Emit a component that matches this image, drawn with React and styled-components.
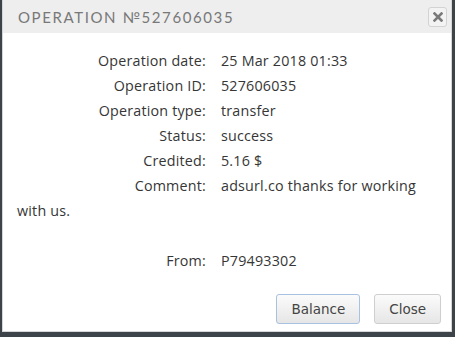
import styled, { createGlobalStyle } from "styled-components";

const GlobalStyle = createGlobalStyle`
  html, body {
    margin: 0;
    padding: 0;
    background: #3c444a;
  }
  #root { height: 337px; overflow: hidden; }
`;

const details = [
  { label: "Operation date:", value: "25 Mar 2018 01:33" },
  { label: "Operation ID:", value: "527606035" },
  { label: "Operation type:", value: "transfer" },
  { label: "Status:", value: "success" },
  { label: "Credited:", value: "5.16 $" },
  { label: "Comment:", value: "adsurl.co thanks for working with us." },
  { label: "From:", value: "P79493302", spaced: true },
];

const CloseIcon = () => (
  <svg width="10" height="10" viewBox="0 0 10 10">
    <path d="M1.5 1.5 L8.5 8.5 M8.5 1.5 L1.5 8.5" stroke="#7a7a7a" strokeWidth="2.6" strokeLinecap="square" />
  </svg>
);

const App = () => {
  return (
    <>
      <GlobalStyle />
      <Dialog>
        <TitleBar>
          <Title>Operation №527606035</Title>
          <CloseButton aria-label="close"><CloseIcon /></CloseButton>
        </TitleBar>
        <Content>
          {details.map((d) => (
            <Row key={d.label} $spaced={d.spaced}>
              <Label>{d.label}</Label>
              <Value>{d.value}</Value>
            </Row>
          ))}
        </Content>
        <Footer>
          <Button $focused>Balance</Button>
          <Button>Close</Button>
        </Footer>
      </Dialog>
    </>
  );
};

const Dialog = styled.div`
  box-sizing: border-box;
  margin: -1px 0 0 2px;
  width: 450px;
  height: 333px;
  background: #fff;
  border: 1px solid #d6d6d6;
  display: flex;
  flex-direction: column;
`;

const TitleBar = styled.div`
  height: 33px;
  flex: none;
  background: #eeeeee;
  display: flex;
  align-items: center;
  justify-content: space-between;
  padding: 0 4px 0 15px;
`;

const Title = styled.div`
  font-family: "Lato", "Open Sans", sans-serif;
  font-size: 15px;
  letter-spacing: 1.6px;
  text-transform: uppercase;
  color: #787878;
  padding-top: 1px;
`;

const CloseButton = styled.button`
  box-sizing: border-box;
  width: 19px;
  height: 20px;
  padding: 0;
  border: 1px solid #d3d3d3;
  border-radius: 3px;
  background: #f3f3f3;
  display: flex;
  align-items: center;
  justify-content: center;
`;

const Content = styled.div`
  flex: 1;
  padding: 15px 14px 0 14px;
  font-family: "Open Sans", sans-serif;
  font-size: 14.3px;
  letter-spacing: 0.2px;
  line-height: 25px;
  color: #363636;
`;

const Row = styled.div`
  margin-top: ${(p) => (p.$spaced ? "25px" : "0")};
`;

const Label = styled.span`
  display: inline-block;
  width: 189px;
  margin-right: 15px;
  text-align: right;
`;

const Value = styled.span``;

const Footer = styled.div`
  display: flex;
  justify-content: flex-end;
  gap: 14px;
  padding: 0 10px 7px 0;
`;

const Button = styled.button`
  box-sizing: border-box;
  height: 30px;
  padding: 0 14px;
  font-family: "DejaVu Sans", sans-serif;
  font-size: 13.5px;
  color: #444;
  background: linear-gradient(#fbfbfb, #e6e6e6);
  border: 1px solid ${(p) => (p.$focused ? "#a9c1e0" : "#cfcfcf")};
  border-radius: 3px;
`;

export default App;
